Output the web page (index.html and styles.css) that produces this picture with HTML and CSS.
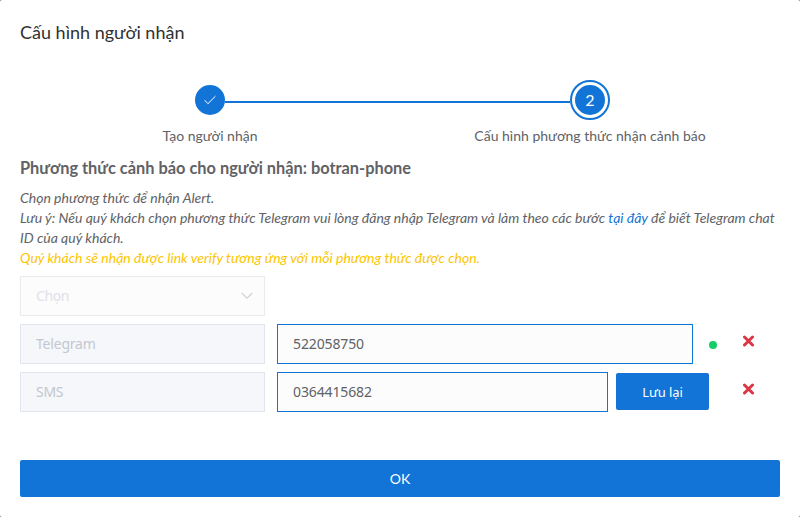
FILE: index.html
```html
<!DOCTYPE html>
<html lang="vi">
<head>
<meta charset="utf-8">
<title>Cấu hình người nhận</title>
<link rel="stylesheet" href="styles.css">
</head>
<body>
<main class="modal">
  <h1 class="title"><span>Cấu hình người nhận</span></h1>
  <div class="steps">
    <div class="step">
      <div class="marker"><div class="circle"><svg width="14" height="12" viewBox="0 0 14 12"><path d="M1.7 6.2 4.9 9.7 12.5 2.1" fill="none" stroke="#fff" stroke-width="1"/></svg></div></div>
      <div class="label label-one">Tạo người nhận</div>
    </div>
    <div class="step">
      <div class="marker"><div class="circle current">2</div></div>
      <div class="label label-two">Cấu hình phương thức nhận cảnh báo</div>
    </div>
  </div>
  <h2 class="subtitle">Phương thức cảnh báo cho người nhận: botran-phone</h2>
  <div class="notes">
    <div class="note-one">Chọn phương thức để nhận Alert.</div>
    <div class="note-two">Lưu ý: Nếu quý khách chọn phương thức Telegram vui lòng đăng nhập Telegram và làm theo các bước <a>tại đây</a> để biết Telegram chat<br>ID của quý khách.</div>
    <div class="warning">Quý khách sẽ nhận được link verify tương ứng với mỗi phương thức được chọn.</div>
  </div>
  <div class="methods">
    <div class="row">
      <div class="field select"><span class="t-select">Chọn</span><svg class="chevron" width="12" height="8" viewBox="0 0 12 8"><path d="M.8 1 6 6.2 11.2 1" fill="none" stroke="#d0d3dc" stroke-width="1.2"/></svg></div>
    </div>
    <div class="row">
      <div class="field disabled"><span class="t-telegram">Telegram</span></div>
      <div class="field input wide"><span class="number">522058750</span></div>
      <i class="dot"></i>
      <svg class="remove" width="12" height="12" viewBox="0 0 12 12"><path d="M2.5 2 10.5 10M10.5 2 2.5 10"/></svg>
    </div>
    <div class="row">
      <div class="field disabled"><span class="t-sms">SMS</span></div>
      <div class="field input narrow"><span class="number">0364415682</span></div>
      <button class="save">Lưu lại</button>
      <svg class="remove" width="12" height="12" viewBox="0 0 12 12"><path d="M2.5 2 10.5 10M10.5 2 2.5 10"/></svg>
    </div>
  </div>
  <button class="ok">OK</button>
</main>
</body>
</html>
```

FILE: styles.css
```css
* { box-sizing: border-box; }
html { background: #777; }
body { margin: 0; font-family: Lato, "Open Sans", sans-serif; font-size: 14px; color: #606266; }
.modal { height: 517px; padding: 20px; background: #fff; border-radius: 2px; overflow: hidden; }
.title { margin: 0; height: 60px; font-size: 18px; line-height: 24px; font-weight: 400; color: #303133; }
.steps { display: flex; height: 75px; }
.step { width: 380px; text-align: center; }
.marker { height: 40px; display: flex; align-items: center; }
.marker::before, .marker::after { content: ""; flex: 1; height: 2px; margin-top: 3px; }
.step:first-child .marker::after, .step:last-child .marker::before { background: #1174d6; }
.circle { width: 30px; height: 30px; border-radius: 50%; background: #1174d6; color: #fff; font-size: 16px; display: flex; align-items: center; justify-content: center; }
.current { width: 40px; height: 40px; border: 2px solid #1174d6; padding: 3px; background: #1174d6 content-box; line-height: 20px; padding-bottom: 3px; }
.label { margin-top: 6px; line-height: 20px; white-space: nowrap; }
.subtitle { margin: 0; font-size: 16.38px; line-height: 26px; font-weight: 700; white-space: nowrap; }
.notes { margin-top: 7px; height: 88px; font-style: italic; line-height: 20px; white-space: nowrap; }
.notes a { color: #1174d6; }
.warning { color: #fdc500; }
.methods { display: flex; flex-direction: column; gap: 8px; }
.row { display: flex; height: 40px; }
.field { width: 245px; height: 40px; border: 1px solid #e4e7ed; padding: 0 15px 2px; display: flex; align-items: center; font-family: "Noto Sans", sans-serif; font-size: 14px; }
.select { background: #fcfcfc; border-color: #ebebeb; color: #e0e1e7; justify-content: space-between; padding-right: 11px; }
.t-select { letter-spacing: -.4px; }
.chevron { margin-top: 1px; }
.t-telegram { letter-spacing: -.2px; }
.t-sms { letter-spacing: -.3px; }
.disabled { background: #f5f7fa; border-color: #e2e5ef; color: #c3c7cf; }
.input { margin-left: 12px; background: #fcfcfc; border-color: #1174d6; }
.number { letter-spacing: -.13px; }
.wide { width: 416px; }
.narrow { width: 331px; }
.dot { width: 8px; height: 8px; margin: 17px 25px 0 16px; border-radius: 50%; background: #13ce66; }
.remove { margin-top: 11px; fill: none; stroke: #dc3545; stroke-width: 3; stroke-linecap: round; }
button { border: 0; padding: 0; color: #fff; background: #1174d6; border-radius: 2px; font: 14px Lato, sans-serif; }
.save { width: 93px; height: 37px; margin: 1px 33px 0 8px; font-family: "Noto Sans", sans-serif; font-size: 13px; letter-spacing: -.1px; }
.ok { display: block; width: 100%; height: 37px; margin-top: 48px; }
```
